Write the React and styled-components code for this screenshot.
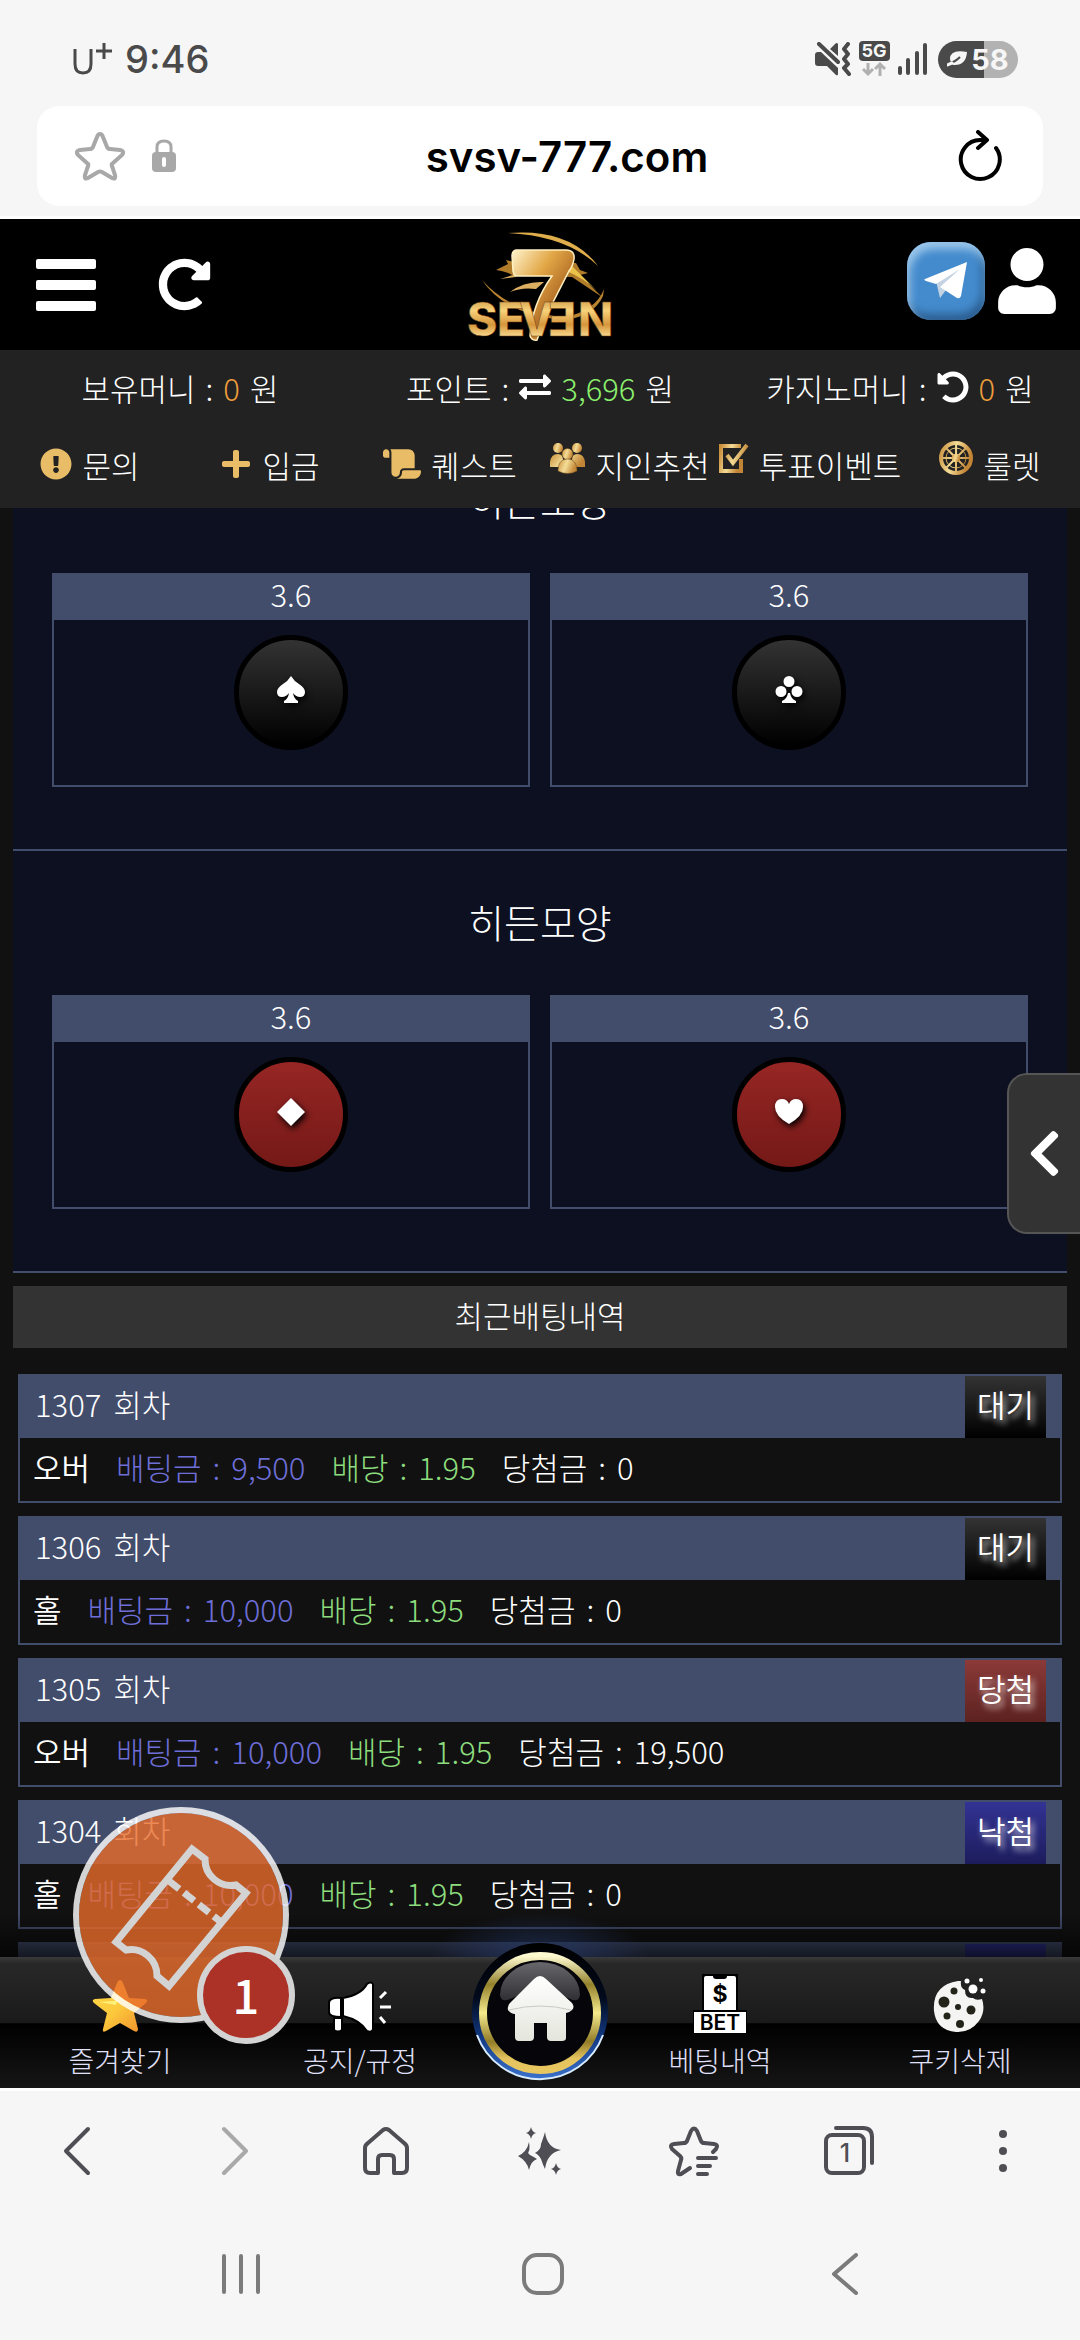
import React from 'react'
import styled, { createGlobalStyle } from 'styled-components'
import {
  FaUser,
  FaExchangeAlt,
  FaRedoAlt,
  FaUndoAlt,
  FaPlus,
  FaChevronLeft,
  FaExclamationCircle,
} from 'react-icons/fa'
import { FaScroll } from 'react-icons/fa6'

const GlobalStyle = createGlobalStyle`
  * {
    box-sizing: border-box;
  }
  body {
    margin: 0;
    background: #111;
    color: #fff;
    font-family: 'Noto Sans CJK KR', sans-serif;
    font-size: 31px;
    font-weight: 300;
  }
  button {
    padding: 0;
    border: 0;
    background: none;
    color: inherit;
    font: inherit;
    cursor: pointer;
  }
  a {
    color: inherit;
    text-decoration: none;
  }
  svg {
    display: block;
    flex-shrink: 0;
  }
`

const Page = styled.div`
  position: relative;
  display: flex;
  flex-direction: column;
  height: 100vh;
  overflow: hidden;
`

/* phone status bar */
const StatusBar = styled.div`
  display: flex;
  align-items: center;
  justify-content: space-between;
  height: 106px;
  padding: 12px 62px 0 72px;
  background: #f6f6f6;
  color: #4a4a4a;
  font-family: Inter, sans-serif;
`
const Clock = styled.div`
  display: flex;
  align-items: center;
  gap: 12px;
  font-size: 38px;
  font-weight: 500;
`
const StatusIcons = styled.div`
  display: flex;
  align-items: center;
  gap: 8px;
`
const Battery = styled.div`
  display: flex;
  align-items: center;
  justify-content: center;
  gap: 4px;
  width: 80px;
  height: 37px;
  margin-left: 2px;
  border-radius: 19px;
  background: linear-gradient(90deg, #4a4a4a 57%, #b2b2b2 57%);
  color: #f6f6f6;
  font-size: 29px;
  font-weight: 700;
`

/* browser chrome */
const AddressArea = styled.div`
  padding: 0 37px 10px;
  background: #f6f6f6;
  border-bottom: 3px solid #fff;
`
const AddressBar = styled.div`
  display: flex;
  align-items: center;
  height: 100px;
  padding: 0 41px 0 38px;
  border-radius: 22px;
  background: #fff;
  color: #000;
`
const AddressIcons = styled.div`
  display: flex;
  align-items: center;
  gap: 27px;
`
const Address = styled.div`
  flex: 1;
  text-align: center;
  font-family: Inter, sans-serif;
  font-size: 42px;
  font-weight: 600;
`
const BrowserBar = styled.nav`
  display: flex;
  height: 123px;
  border-top: 3px solid #fff;
  background: #f6f6f6;
  color: #4e4e54;
`
const BarButton = styled.button`
  flex: 1;
  display: flex;
  align-items: center;
  justify-content: center;
  color: ${props => (props.$faded ? '#a9a9a9' : 'inherit')};
`
const SystemBar = styled.nav`
  display: flex;
  height: 129px;
  padding: 0 84px 4px 90px;
  background: #f6f6f6;
  color: #7b7b7b;
`

/* site header */
const SiteHeader = styled.header`
  display: flex;
  align-items: center;
  justify-content: space-between;
  height: 131px;
  padding: 0 24px;
  background: #000;
`
const MenuGroup = styled.div`
  flex: 1;
  display: flex;
  align-items: center;
  gap: 62px;
`
const AccountGroup = styled.div`
  flex: 1;
  display: flex;
  align-items: center;
  justify-content: flex-end;
  gap: 13px;
  padding-bottom: 8px;
`
const Burger = styled.button`
  display: flex;
  flex-direction: column;
  gap: 11px;
  margin-left: 12px;
  span {
    width: 60px;
    height: 10px;
    border-radius: 2px;
    background: #fff;
  }
`
const TelegramLink = styled.a`
  display: flex;
  align-items: center;
  justify-content: center;
  width: 78px;
  height: 78px;
  border-radius: 24px;
  background: #448bcd;
  box-shadow: inset 3px 7px 8px #9cc7ea, inset -3px -6px 8px #2a5c8e;
`
const UserIcon = styled(FaUser)`
  width: 58px;
  height: 66px;
`

/* balances and shortcuts */
const InfoBand = styled.div`
  position: relative;
  z-index: 1;
  padding-bottom: 4px;
  background: #222;
`
const InfoRow = styled.div`
  display: flex;
  height: 77px;
  padding-bottom: 3px;
`
const InfoItem = styled.div`
  flex: 1 1 0;
  min-width: 0;
  display: flex;
  align-items: center;
  justify-content: center;
  gap: 10px;
  white-space: nowrap;
`
const Amount = styled.span`
  color: ${props => (props.$green ? '#8cf06e' : '#eb9c3c')};
`
const Shortcut = styled.a`
  flex: 1 1 0;
  min-width: 0;
  display: flex;
  align-items: center;
  justify-content: center;
  gap: 10px;
  white-space: nowrap;
  svg {
    color: #e9bd68;
  }
`
const RaisedIcon = styled.span`
  padding-bottom: 12px;
`

/* scrolled game area */
const Main = styled.main`
  flex: 1;
  min-height: 0;
  overflow: hidden;
`
const Scrolled = styled.div`
  margin-top: -79px;
  padding: 0 13px;
`
const Section = styled.section`
  padding: 0 39px 62px;
  border-bottom: 2px solid #424c6b;
  background: #0d1020;
`
const SectionTitle = styled.h2`
  margin: 0;
  padding-bottom: 4px;
  font-size: 39px;
  font-weight: 300;
  line-height: 140px;
  text-align: center;
`
const Cards = styled.div`
  display: grid;
  grid-template-columns: 1fr 1fr;
  gap: 20px;
`
const Card = styled.div`
  height: 214px;
  border: 2px solid #424c6b;
  text-align: center;
`
const Odds = styled.div`
  height: 45px;
  background: #424c6b;
  line-height: 38px;
`
const SuitButton = styled.button`
  display: inline-flex;
  align-items: center;
  justify-content: center;
  width: 114px;
  height: 115px;
  margin-top: 15px;
  padding-bottom: 6px;
  border: 5px solid #000;
  border-radius: 57px;
  background: ${props =>
    props.$red
      ? 'linear-gradient(#962624, #741917)'
      : 'linear-gradient(#333, #000)'};
  svg {
    filter: drop-shadow(2px 3px 3px #000);
  }
`
const ListTitle = styled.h3`
  margin: 13px 0 26px;
  padding-bottom: 4px;
  background: #333;
  font-size: 31px;
  font-weight: 300;
  line-height: 58px;
  text-align: center;
`
const BetList = styled.div`
  display: flex;
  flex-direction: column;
  gap: 13px;
  padding: 0 5px;
`
const Bet = styled.article`
  border: 2px solid #424c6b;
`
const BetHead = styled.div`
  display: flex;
  justify-content: space-between;
  height: 62px;
  padding: 0 14px 0 15px;
  background: #424c6b;
  line-height: 56px;
`
const Round = styled.span`
  display: flex;
  gap: 12px;
`
const badgeColors = {
  대기: '#333, #000',
  당첨: '#8b3a38, #5c2220',
  낙첨: '#333394, #1c1c5c',
}
const ResultBadge = styled.span`
  padding: 0 12px;
  background: linear-gradient(${props => badgeColors[props.$result]});
  font-weight: 350;
  text-shadow: 3px 4px 6px #ffffffd0;
`
const BetBody = styled.div`
  display: flex;
  gap: 26px;
  height: 63px;
  padding: 0 13px;
  line-height: 57px;
`
const fieldColors = {
  stake: '#6e6ed8',
  rate: '#8ddc7e',
}
const FieldText = styled.span`
  display: flex;
  gap: 11px;
  color: ${props => fieldColors[props.$kind] || '#fff'};
`
const Pick = styled.span`
  font-weight: 350;
`

/* site tab bar */
const TabBar = styled.nav`
  position: relative;
  display: flex;
  height: 131px;
  background: linear-gradient(#3a3a3a, #282828 5%, #1a1a1a 50%, #000 51%, #161616);
  color: #e0e0fa;
  &::before {
    content: '';
    position: absolute;
    right: 0;
    bottom: 100%;
    left: 0;
    height: 44px;
    background: radial-gradient(ellipse 110px 44px at 50% 100%, #2c468490, transparent),
      linear-gradient(transparent, #000000b0);
    pointer-events: none;
  }
`
const Tab = styled.a`
  flex: 2;
  display: flex;
  flex-direction: column;
  align-items: center;
  justify-content: flex-end;
  gap: 9px;
  padding-bottom: 10px;
  font-size: 28px;
  line-height: 36px;
`
const HomeTab = styled.a`
  flex: 1;
  position: relative;
  svg {
    position: absolute;
    top: -16px;
    left: 50%;
    margin-left: -68px;
  }
`

/* floating controls */
const SideHandle = styled.button`
  position: absolute;
  top: 1073px;
  right: 0;
  display: flex;
  align-items: center;
  justify-content: center;
  width: 73px;
  height: 161px;
  border: 2px solid #555;
  border-right: 0;
  border-radius: 20px 0 0 20px;
  background: #333;
`
const CouponButton = styled.button`
  position: absolute;
  bottom: 317px;
  left: 73px;
  width: 216px;
  height: 216px;
  border: 6px solid #ffffffd0;
  border-radius: 50%;
  background: #e96c2acc;
  background-clip: padding-box;
`
const CouponCount = styled.span`
  position: absolute;
  right: -12px;
  bottom: -27px;
  width: 98px;
  height: 98px;
  border: 6px solid #d3d3d3;
  border-radius: 50%;
  background: #ac3228;
  font-size: 47px;
  font-weight: 500;
  line-height: 84px;
`

const GoldGradient = ({ id }) => (
  <defs>
    <linearGradient id={id} x1='0' x2='1' y1='0' y2='0.3'>
      <stop offset='0' stopColor='#c98f3c' />
      <stop offset='0.5' stopColor='#f4dc96' />
      <stop offset='1' stopColor='#c28535' />
    </linearGradient>
  </defs>
)

const Carrier = () => (
  <svg width='41' height='36' viewBox='0 0 41 36' fill='none' stroke='#4a4a4a'>
    <path d='M3 8v15q0 9 8 9t8-9V8' strokeWidth='3' />
    <path d='M32 2v16M24 10h16' strokeWidth='3' />
  </svg>
)

const MuteIcon = () => (
  <svg width='36' height='34' viewBox='0 0 36 34'>
    <path d='M0 13q0-3 3-3h3l17 16v6q0 2-2 1l-9-9H3q-3 0-3-3zM15 7l5-5q2-2 3 0v12z' fill='#4a4a4a' />
    <path
      d='M4 2l19 18M33 2l-4 5 4 5-4 5 4 5-4 4 5 6'
      fill='none'
      stroke='#4a4a4a'
      strokeWidth='4'
      strokeLinecap='round'
      strokeLinejoin='round'
    />
  </svg>
)

const NetworkIcon = () => (
  <svg width='31' height='36' viewBox='0 0 31 36'>
    <rect width='31' height='20' rx='4' fill='#4a4a4a' />
    <text x='15' y='16' textAnchor='middle' fontFamily='Inter' fontSize='18' fontWeight='700' fill='#f6f6f6'>
      5G
    </text>
    <path d='M9 22v11M4 28l5 5 5-5M21 35V23M16 28l5-5 5 5' fill='none' stroke='#b0b0b0' strokeWidth='3' />
  </svg>
)

const SignalIcon = () => (
  <svg width='30' height='34' viewBox='0 0 30 34' stroke='#4a4a4a' strokeWidth='4' strokeLinecap='round'>
    <path d='M2 26v5M10 18v13M19 11v20M27 3v28' />
  </svg>
)

const LeafIcon = () => (
  <svg width='20' height='17' viewBox='0 0 20 17'>
    <path d='M20 1q-17-3-17 7 0 3 3 6 13 1 14-13z' fill='#f6f6f6' />
    <path d='M13 6Q8 11 3 12' fill='none' stroke='#4a4a4a' strokeWidth='2' />
    <path d='M5 12l-5 2' stroke='#f6f6f6' strokeWidth='3' strokeLinecap='round' />
  </svg>
)

const starOutline =
  'M25 3q2 0 3 3l4 10q1 2 3 2l10 1q5 1 2 5l-9 8q-2 1-1 3l3 9q1 5-3 3l-10-6q-2-1-4 0l-10 6q-4 2-3-3l3-9q1-2-1-3l-9-8q-3-4 2-5l10-1q2 0 3-2l4-10q1-3 3-3z'

const BookmarkStar = () => (
  <svg width='50' height='50' viewBox='0 0 50 50' fill='none' stroke='#a8a8a8' strokeWidth='4'>
    <path d={starOutline} />
  </svg>
)

const LockIcon = () => (
  <svg width='24' height='34' viewBox='0 0 24 34'>
    <path d='M5 15V8q0-6 7-6t7 6v7' fill='none' stroke='#a8a8a8' strokeWidth='3' />
    <rect y='13' width='24' height='20' rx='4' fill='#a8a8a8' />
    <path d='M12 20v6' stroke='#fff' strokeWidth='4' strokeLinecap='round' />
  </svg>
)

const ReloadIcon = () => (
  <svg width='44' height='52' viewBox='0 0 44 52' fill='none' stroke='#000' strokeWidth='4' strokeLinecap='round' strokeLinejoin='round'>
    <path d='M38 18A19.500 19.500 0 1 1 22 10h6' />
    <path d='M20 2l9 8-9 8' />
  </svg>
)

const Logo = () => (
  <svg width='160' height='118' viewBox='0 0 160 118'>
    <defs>
      <linearGradient id='seven' x1='0' x2='1' y1='0' y2='1'>
        <stop offset='0' stopColor='#fff3cd' />
        <stop offset='0.35' stopColor='#e2a746' />
        <stop offset='0.6' stopColor='#b8742a' />
        <stop offset='1' stopColor='#f3c96b' />
      </linearGradient>
      <linearGradient id='word' x1='0' x2='0' y1='0' y2='1'>
        <stop offset='0' stopColor='#b6792c' />
        <stop offset='0.35' stopColor='#f8d27a' />
        <stop offset='0.6' stopColor='#d6963c' />
        <stop offset='0.85' stopColor='#ffe59c' />
        <stop offset='1' stopColor='#8c5a1e' />
      </linearGradient>
    </defs>
    <path d='M48 7q62-5 90 33-31-30-90-33z' fill='#e0ad4c' />
    <path d='M22 54q30 34 84 37 30-7 38-28l-1 7q-9 20-38 24-60-5-83-40z' fill='#b9832f' />
    <path d='M36 44l12-6-2-4 12 3h58l4 7 8 3-8 2 22 22-30-20-60-2q-4-3-16-5z' fill='#b07c2a' />
    <path d='M50 66q14-11 34-10l-8 7q-14-2-26 3zM40 53l16-5v3z' fill='#dcae62' />
    <path d='M104 38l8 2 24 24q-12-12-32-20z' fill='#eac24a' />
    <path
      d='M56 24h50q9 0 8 9-1 7-5 12L86 90l-9 24q-5 1-7-4 2-32 22-60H57q-3 0-4-5l-1-15q0-5 4-6z'
      fill='url(#seven)'
      stroke='#fff0c0'
      strokeWidth='1.500'
    />
    <g fill='url(#word)' fontFamily='Inter' fontSize='46' fontWeight='800' stroke='#6f3d12' strokeWidth='0.500'>
      <text x='7' y='110'>S</text>
      <text x='37' y='110'>E</text>
      <text x='59' y='110'>V</text>
      <text x='88' y='110'>Ǝ</text>
      <text x='118' y='110'>N</text>
    </g>
  </svg>
)

const PlaneIcon = () => (
  <svg width='44' height='38' viewBox='0 0 44 38'>
    <path d='M12 19l4 17 6-8 20-27z' fill='#c4d3e3' />
    <path d='M43 0L1 17q-2 1 1 2l10 3L36 7 16 25l17 11q3 1 4-2z' fill='#fff' />
  </svg>
)

const PeopleIcon = () => (
  <svg width='35' height='32' viewBox='0 0 35 32' fill='url(#people)'>
    <GoldGradient id='people' />
    <circle cx='8' cy='6' r='5' />
    <circle cx='27' cy='6' r='5' />
    <path d='M0 25q-1-13 8-13 5 0 5 6l-4 7zM35 25q1-13-8-13-5 0-5 6l4 7z' />
    <g stroke='#6b4a1a' strokeWidth='0.500'>
      <circle cx='17.500' cy='12' r='5.500' />
      <path d='M8 29q0-12 9.500-12T27 29q-9 5-19 0z' />
    </g>
  </svg>
)

const VoteIcon = () => (
  <svg width='30' height='32' viewBox='0 0 30 32' fill='none' stroke='url(#vote)'>
    <GoldGradient id='vote' />
    <path d='M22 4H2v25h20V17' strokeWidth='4' />
    <path d='M8 13l6 8L28 3' strokeWidth='4' />
  </svg>
)

const WheelIcon = () => (
  <svg width='34' height='36' viewBox='0 0 34 36' fill='none' stroke='url(#wheel)'>
    <GoldGradient id='wheel' />
    <circle cx='17' cy='18' r='15' strokeWidth='4' />
    <circle cx='17' cy='18' r='10' strokeWidth='1' />
    <path d='M17.100 3L17 33M2 18l30 .1M6 7l22 22M28 7L6 29' strokeWidth='2' />
    <circle cx='17' cy='18' r='4' fill='url(#wheel)' />
  </svg>
)

const suitPaths = {
  spade: 'M14 0q3 5 8 8 6 4 6 8 0 5-5 5-4 0-7-4 1 6 5 8v2H7v-2q4-2 5-8-3 4-7 4-5 0-5-5 0-4 6-8 5-3 8-8z',
  club: 'M13 17h2q1 6 6 8v2H7v-2q5-2 6-8zM14 0a5.500 5.500 0 1 1 0 11 5.500 5.500 0 0 1 0-11zM6 10a5.500 5.500 0 1 1 0 11 5.500 5.500 0 0 1 0-11zM22 10a5.500 5.500 0 1 1 0 11 5.500 5.500 0 0 1 0-11z',
  diamond: 'M14 0l14 14-14 14L0 14z',
  heart: 'M14 6q2-5 7-5 7 0 7 8 0 9-14 17Q0 18 0 9q0-8 7-8 5 0 7 5z',
}

const Suit = ({ name }) => (
  <svg width='28' height='28' viewBox='0 0 28 28' fill='#fff'>
    <path d={suitPaths[name]} />
  </svg>
)

const StarIcon = () => (
  <svg width='56' height='54' viewBox='0 0 56 54'>
    <defs>
      <linearGradient id='star' x1='0' x2='1' y1='0' y2='1'>
        <stop offset='0' stopColor='#ffd84a' />
        <stop offset='0.5' stopColor='#fcc93c' />
        <stop offset='1' stopColor='#ee8a2a' />
      </linearGradient>
    </defs>
    <path
      d='M28 1q2 0 3 3l6 15 16 1q4 1 1 4L42 34l4 16q0 4-4 2l-14-8-14 8q-4 2-3-2l4-16L2 24q-3-3 1-4l16-1 6-15q1-3 3-3z'
      fill='url(#star)'
    />
    <path d='M28 8l-5 14-16 1 17 3z' fill='#fff27a' />
  </svg>
)

const MegaphoneIcon = () => (
  <svg width='64' height='52' viewBox='0 0 64 52'>
    <g fill='#fff' stroke='#000' strokeWidth='2'>
      <path d='M15 17q18-3 24-14 4-3 6 0v45q-1 4-6 2-7-11-24-15z' />
      <path d='M13 17q-12-1-12 5v9q0 5 12 5zM6 37h8v12q-4 3-8 0z' />
    </g>
    <path d='M52 17l6-6M52 26h11M52 36l5 6' stroke='#fff' strokeWidth='3' />
  </svg>
)

const BetIcon = () => (
  <svg width='56' height='60' viewBox='0 0 56 60'>
    <path d='M10 1h36v36h9v23H1V37h9z' fill='#000' />
    <path d='M14 3h7q0 3 3 3h8q3 0 3-3h7q2 0 2 2v32H12V5q0-2 2-2zM2 39h52v21H2z' fill='#fff' />
    <text x='28' y='29' textAnchor='middle' fontFamily='Inter' fontSize='23' fontWeight='700' fill='#000'>
      $
    </text>
    <text x='28' y='57' textAnchor='middle' fontFamily='Inter' fontSize='21' fontWeight='600' fill='#000'>
      BET
    </text>
  </svg>
)

const CookieIcon = () => (
  <svg width='54' height='56' viewBox='0 0 54 56'>
    <path d='M28 4q-1 7 4 9 0 9 8 8 3 3 9 1 4 12-3 22-9 12-23 11Q3 53 1 34-1 8 25 4z' fill='#f4f4f2' />
    <g fill='#23231a'>
      <circle cx='11' cy='25' r='5.500' />
      <circle cx='21' cy='14' r='3.500' />
      <circle cx='25' cy='30' r='3' />
      <circle cx='38' cy='33' r='4.500' />
      <circle cx='14' cy='39' r='3.500' />
      <circle cx='27' cy='47' r='4' />
    </g>
    <g fill='#fff'>
      <circle cx='40' cy='12' r='4.500' />
      <circle cx='34' cy='4' r='2.500' />
      <circle cx='48' cy='3' r='2' />
      <circle cx='50' cy='14' r='2.500' />
    </g>
  </svg>
)

const HomeMedal = () => (
  <svg width='136' height='140' viewBox='0 0 136 140'>
    <defs>
      <linearGradient id='rim' x1='0' x2='0' y1='0' y2='1'>
        <stop offset='0' stopColor='#000' />
        <stop offset='0.4' stopColor='#020a1c' />
        <stop offset='0.7' stopColor='#123a86' />
        <stop offset='1' stopColor='#3a72cc' />
      </linearGradient>
      <linearGradient id='ring' x1='0' x2='0' y1='0' y2='1'>
        <stop offset='0' stopColor='#fffbd0' />
        <stop offset='0.25' stopColor='#94812c' />
        <stop offset='0.5' stopColor='#f5ea8c' />
        <stop offset='0.75' stopColor='#927c28' />
        <stop offset='0.9' stopColor='#e4c35e' />
        <stop offset='1' stopColor='#e8c660' />
      </linearGradient>
      <linearGradient id='gloss' x1='0' x2='0' y1='0' y2='1'>
        <stop offset='0' stopColor='#68686c' />
        <stop offset='1' stopColor='#303034' />
      </linearGradient>
      <linearGradient id='house' x1='0' x2='0' y1='0' y2='1'>
        <stop offset='0' stopColor='#fff' />
        <stop offset='1' stopColor='#e4e6dc' />
      </linearGradient>
    </defs>
    <circle cx='68' cy='70' r='68' fill='url(#rim)' />
    <path d='M5 94a67 67 0 0 0 126 0' fill='none' stroke='#d8ecff' strokeWidth='2' />
    <circle cx='68' cy='72' r='57' fill='#05050a' stroke='url(#ring)' strokeWidth='8' />
    <path d='M28 54A40 33 0 0 1 108 54q-1 8-10 4-30-14-60 0-9 4-10-4z' fill='url(#gloss)' />
    <path
      d='M68 35q3 0 6 3l26 24q3 4 0 7-3 3-6 3v25q0 3-4 3H79q-4 0-4-4V82H62v14q0 4-4 4H47q-4 0-4-4V73q-4 0-7-4-1-4 2-7l24-24q3-3 6-3z'
      fill='url(#house)'
    />
    <path d='M37 69q31-8 62 0' fill='none' stroke='#c9cbc2' strokeWidth='1' />
  </svg>
)

const TicketIcon = () => (
  <svg width='204' height='204' viewBox='6 6 204 204' fill='none' stroke='#d3d3d3' strokeWidth='7'>
    <path d='M119 42l13 10a26 26 0 0 0 31 26l10 8-77 93-12-10a26 26 0 0 0-31-26l-10-8z' />
    <path d='M96 74l52 41' strokeDasharray='13 6' />
  </svg>
)

const BackIcon = () => (
  <svg width='28' height='52' viewBox='0 0 28 52' fill='none' stroke='currentColor' strokeWidth='4' strokeLinecap='round' strokeLinejoin='round'>
    <path d='M25 4L3 26l22 22' />
  </svg>
)

const ForwardIcon = () => (
  <svg width='34' height='52' viewBox='0 0 34 52' fill='none' stroke='currentColor' strokeWidth='4' strokeLinecap='round' strokeLinejoin='round'>
    <path d='M10 4l22 22-22 22' />
  </svg>
)

const HouseIcon = () => (
  <svg width='46' height='50' viewBox='0 0 46 50' fill='none' stroke='currentColor' strokeWidth='4' strokeLinejoin='round'>
    <path d='M20 4q3-2 6 0l15 13q3 2 3 5v20q0 5-5 5h-8V33q0-4-4-4h-8q-4 0-4 4v14H7q-5 0-5-5V22q0-3 3-5z' />
  </svg>
)

const SparkleIcon = () => (
  <svg width='44' height='50' viewBox='0 0 44 50' fill='currentColor'>
    <path d='M27 6q2 16 16 18-14 3-16 19-2-4-4-10-3-5-6-6 6-3 6-9 3-8 4-12z' />
    <path d='M11 16q1 6 0 9-2 2 1 4 4 2 7 4-6 2-8 11-2-9-11-14 9-4 11-14zM13 1q1 5 5 6-4 1-5 6-1-5-5-6 4-1 5-6zM38 37q1 5 5 6-4 1-5 6-1-5-5-6 4-1 5-6z' />
  </svg>
)

const StarListIcon = () => (
  <svg width='52' height='52' viewBox='0 0 52 52' fill='none' stroke='currentColor' strokeWidth='4' strokeLinecap='round' strokeLinejoin='round'>
    <path d='M45 27l3-3q3-4-2-5l-10-1q-2 0-3-2l-4-10q-3-5-6 0l-4 10q-1 2-3 2L6 19q-5 1-2 5l8 7q2 2 1 4l-3 11q-1 4 3 3l9-6' />
    <path d='M30 33h18M30 41h12M30 49h9' />
  </svg>
)

const TabsIcon = () => (
  <svg width='50' height='50' viewBox='0 0 50 50' fill='none' stroke='currentColor' strokeWidth='4' strokeLinecap='round'>
    <rect x='2' y='9' width='38' height='38' rx='6' />
    <path d='M12 2h27q9 0 9 9v26' />
    <text x='21' y='36' textAnchor='middle' fontFamily='Inter' fontSize='25' fontWeight='500' fill='currentColor' stroke='none'>
      1
    </text>
  </svg>
)

const DotsIcon = () => (
  <svg width='8' height='42' viewBox='0 0 8 42' fill='currentColor'>
    <circle cx='4' cy='4' r='4' />
    <circle cx='4' cy='21' r='4' />
    <circle cx='4' cy='38' r='4' />
  </svg>
)

const RecentsIcon = () => (
  <svg width='38' height='42' viewBox='0 0 38 42' stroke='currentColor' strokeWidth='4' strokeLinecap='round'>
    <path d='M2 3v36M19 3v36M36 3v36' />
  </svg>
)

const HomeKeyIcon = () => (
  <svg width='42' height='42' viewBox='0 0 42 42' fill='none' stroke='currentColor' strokeWidth='4'>
    <rect x='2' y='2' width='38' height='38' rx='13' />
  </svg>
)

const BackKeyIcon = () => (
  <svg width='28' height='42' viewBox='0 0 28 42' fill='none' stroke='currentColor' strokeWidth='4' strokeLinecap='round' strokeLinejoin='round'>
    <path d='M25 2L3 21l22 19' />
  </svg>
)

const sections = [
  { id: 'black', suits: ['spade', 'club'], red: false },
  { id: 'red', suits: ['diamond', 'heart'], red: true },
]

const bets = [
  { round: 1307, pick: '오버', stake: '9,500', win: '0', result: '대기' },
  { round: 1306, pick: '홀', stake: '10,000', win: '0', result: '대기' },
  { round: 1305, pick: '오버', stake: '10,000', win: '19,500', result: '당첨' },
  { round: 1304, pick: '홀', stake: '10,000', win: '0', result: '낙첨' },
  { round: 1303, pick: '홀', stake: '10,000', win: '0', result: '낙첨' },
]

const SuitSection = ({ suits, red }) => (
  <Section>
    <SectionTitle>히든모양</SectionTitle>
    <Cards>
      {suits.map(suit => (
        <Card key={suit}>
          <Odds>3.6</Odds>
          <SuitButton $red={red} aria-label={suit}>
            <Suit name={suit} />
          </SuitButton>
        </Card>
      ))}
    </Cards>
  </Section>
)

const Field = ({ label, value, kind }) => (
  <FieldText $kind={kind}>
    <span>{label}</span>
    <span>:</span>
    <span>{value}</span>
  </FieldText>
)

const BetRow = ({ bet }) => (
  <Bet>
    <BetHead>
      <Round>
        <span>{bet.round}</span>
        <span>회차</span>
      </Round>
      <ResultBadge $result={bet.result}>{bet.result}</ResultBadge>
    </BetHead>
    <BetBody>
      <Pick>{bet.pick}</Pick>
      <Field label='배팅금' value={bet.stake} kind='stake' />
      <Field label='배당' value='1.95' kind='rate' />
      <Field label='당첨금' value={bet.win} />
    </BetBody>
  </Bet>
)

export default function App() {
  return (
    <Page>
      <GlobalStyle />
      <StatusBar>
        <Clock>
          <Carrier />
          9:46
        </Clock>
        <StatusIcons>
          <MuteIcon />
          <NetworkIcon />
          <SignalIcon />
          <Battery>
            <LeafIcon />
            58
          </Battery>
        </StatusIcons>
      </StatusBar>
      <AddressArea>
        <AddressBar>
          <AddressIcons>
            <BookmarkStar />
            <LockIcon />
          </AddressIcons>
          <Address>svsv-777.com</Address>
          <button aria-label='reload'>
            <ReloadIcon />
          </button>
        </AddressBar>
      </AddressArea>

      <SiteHeader>
        <MenuGroup>
          <Burger aria-label='menu'>
            <span />
            <span />
            <span />
          </Burger>
          <button aria-label='refresh'>
            <FaRedoAlt size={53} />
          </button>
        </MenuGroup>
        <Logo />
        <AccountGroup>
          <TelegramLink href='#telegram' aria-label='telegram'>
            <PlaneIcon />
          </TelegramLink>
          <a href='#account' aria-label='account'>
            <UserIcon />
          </a>
        </AccountGroup>
      </SiteHeader>

      <InfoBand>
        <InfoRow>
          <InfoItem>
            <span>보유머니</span>
            <span>:</span>
            <Amount>0</Amount>
            <span>원</span>
          </InfoItem>
          <InfoItem>
            <span>포인트</span>
            <span>:</span>
            <FaExchangeAlt size={32} />
            <Amount $green>3,696</Amount>
            <span>원</span>
          </InfoItem>
          <InfoItem>
            <span>카지노머니</span>
            <span>:</span>
            <FaUndoAlt size={32} />
            <Amount>0</Amount>
            <span>원</span>
          </InfoItem>
        </InfoRow>
        <InfoRow>
          <Shortcut href='#ask'>
            <FaExclamationCircle size={32} />
            문의
          </Shortcut>
          <Shortcut href='#deposit'>
            <FaPlus size={32} />
            입금
          </Shortcut>
          <Shortcut href='#quest'>
            <FaScroll size={38} />
            퀘스트
          </Shortcut>
          <Shortcut href='#invite'>
            <RaisedIcon>
              <PeopleIcon />
            </RaisedIcon>
            지인추천
          </Shortcut>
          <Shortcut href='#vote'>
            <RaisedIcon>
              <VoteIcon />
            </RaisedIcon>
            투표이벤트
          </Shortcut>
          <Shortcut href='#roulette'>
            <RaisedIcon>
              <WheelIcon />
            </RaisedIcon>
            룰렛
          </Shortcut>
        </InfoRow>
      </InfoBand>

      <Main>
        <Scrolled>
          {sections.map(section => (
            <SuitSection key={section.id} suits={section.suits} red={section.red} />
          ))}
          <ListTitle>최근배팅내역</ListTitle>
          <BetList>
            {bets.map(bet => (
              <BetRow key={bet.round} bet={bet} />
            ))}
          </BetList>
        </Scrolled>
      </Main>

      <TabBar>
        <Tab href='#favorites'>
          <StarIcon />
          즐겨찾기
        </Tab>
        <Tab href='#notice'>
          <MegaphoneIcon />
          공지/규정
        </Tab>
        <HomeTab href='#home' aria-label='home'>
          <HomeMedal />
        </HomeTab>
        <Tab href='#bets'>
          <BetIcon />
          베팅내역
        </Tab>
        <Tab href='#cookies'>
          <CookieIcon />
          쿠키삭제
        </Tab>
      </TabBar>

      <BrowserBar>
        <BarButton aria-label='back'>
          <BackIcon />
        </BarButton>
        <BarButton aria-label='forward' $faded>
          <ForwardIcon />
        </BarButton>
        <BarButton aria-label='start page'>
          <HouseIcon />
        </BarButton>
        <BarButton aria-label='assist'>
          <SparkleIcon />
        </BarButton>
        <BarButton aria-label='bookmarks'>
          <StarListIcon />
        </BarButton>
        <BarButton aria-label='tabs'>
          <TabsIcon />
        </BarButton>
        <BarButton aria-label='more'>
          <DotsIcon />
        </BarButton>
      </BrowserBar>
      <SystemBar>
        <BarButton aria-label='recent apps'>
          <RecentsIcon />
        </BarButton>
        <BarButton aria-label='home screen'>
          <HomeKeyIcon />
        </BarButton>
        <BarButton aria-label='go back'>
          <BackKeyIcon />
        </BarButton>
      </SystemBar>

      <SideHandle aria-label='open panel'>
        <FaChevronLeft size={53} />
      </SideHandle>
      <CouponButton aria-label='coupons'>
        <TicketIcon />
        <CouponCount>1</CouponCount>
      </CouponButton>
    </Page>
  )
}
